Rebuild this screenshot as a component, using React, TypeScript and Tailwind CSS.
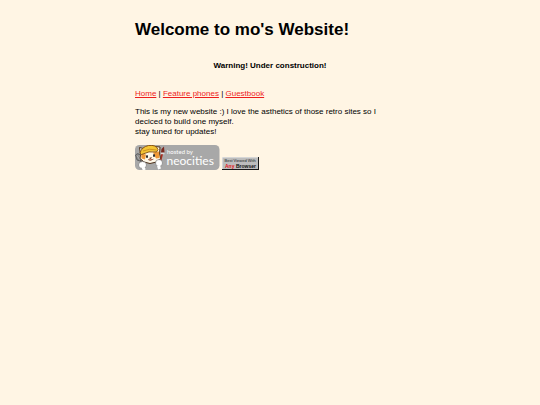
const links = [
  { label: 'Home', href: '#home' },
  { label: 'Feature phones', href: '#phones' },
  { label: 'Guestbook', href: '#guestbook' },
]

function NeocitiesBadge() {
  return (
    <svg viewBox="0 0 170 50" className="w-[85px]" role="img" aria-label="hosted by neocities">
      <rect width="169" height="50" rx="9" fill="#a8a8a8" />
      {/* spatula */}
      <path d="M10 27 L15 42" stroke="#555" strokeWidth="3" />
      <path d="M1 20 q4 -5 9 -1 l4 10 q-5 5 -10 1 z" fill="#888" stroke="#333" />
      <path d="M4 21 l5 8 M8 20 l3 8" stroke="#ddd" />
      {/* paint brush */}
      <path d="M50 34 L54 18" stroke="#a52c20" strokeWidth="4" strokeLinecap="round" />
      <path d="M52 15 L53 8 L58 3 L59 15 Z" fill="#7c2a20" />
      <path d="M52 17 h7" stroke="#ddd" strokeWidth="3" />
      {/* cat */}
      <path d="M11 19 L9 5 L20 8 L37 3 L50 4 L49 18 L51 27 L43 34 L30 37 L18 34 L10 27 Z" fill="#fff8e8" stroke="#4e321c" strokeWidth="2" />
      <path d="M12 17 L22 19 L20 29 L13 27 Z M36 15 L48 13 L49 26 L42 27 Z" fill="#ef9838" />
      <path d="M10 16 Q13 4 27 1 Q42 -1 46 9 L43 14 Q28 11 13 19 Z" fill="#f4c535" stroke="#8b5715" strokeWidth="2" />
      <path d="M16 12 Q29 6 43 10" fill="none" stroke="#d09320" strokeWidth="2" />
      <ellipse cx="24" cy="23" rx="2" ry="3" fill="#222" />
      <ellipse cx="38" cy="21" rx="2" ry="3" fill="#222" />
      <path d="M29 26 l4 -1 l-2 3 z M26 29 q5 4 11 -1" fill="#ca5741" stroke="#56301c" />
      <ellipse cx="15" cy="40" rx="8" ry="7" fill="#fff" stroke="#555" />
      <ellipse cx="48" cy="36" rx="7" ry="7" fill="#fff" stroke="#555" />
      <path d="M16 45 L19 50 M47 41 L49 48" stroke="#fff" strokeWidth="6" />
      <text fill="#fff" className="font-['Lato',sans-serif]">
        <tspan x="64" y="17" fontSize="12">
          hosted by
        </tspan>
        <tspan x="63" y="40" fontSize="24">
          neocities
        </tspan>
      </text>
    </svg>
  )
}

function AnyBrowserBadge() {
  return (
    <svg viewBox="0 0 74 26" className="w-[37px]" role="img" aria-label="Best Viewed With Any Browser">
      <rect width="74" height="26" fill="#181818" />
      <rect width="72" height="24" fill="#eee" />
      <rect x="1" y="1" width="71" height="23" fill="#bdbdbd" />
      <text x="5" y="9" fill="#222" fontSize="8" className="font-['Liberation_Sans',sans-serif]">
        Best Viewed With
      </text>
      <text y="21" fontSize="10" className="font-['Liberation_Sans',sans-serif] font-bold">
        <tspan x="6" fill="#e5131b">
          Any
        </tspan>
        <tspan x="28" fill="#111">
          Browser
        </tspan>
      </text>
    </svg>
  )
}

export default function App() {
  return (
    <div className="min-h-screen bg-[#fff5e4] font-['Liberation_Sans',Arial,sans-serif] text-[8px] leading-[10px] text-black">
      <main className="mx-auto w-1/2 pt-5">
        <h1 className="text-[17px] leading-5 font-bold">Welcome to mo's Website!</h1>
        <h4 className="mt-[21px] text-center font-bold">Warning! Under construction!</h4>
        <nav className="mt-[18px]">
          {links.map((link, i) => (
            <span key={link.href}>
              {i > 0 && ' | '}
              <a href={link.href} className="text-[#ee1c1c] underline">
                {link.label}
              </a>
            </span>
          ))}
        </nav>
        <p className="mt-2">
          This is my new website :) I love the asthetics of those retro sites so I deciced to build one myself.
          <br />
          stay tuned for updates!
        </p>
        <div className="mt-2 flex items-end gap-0.5">
          <NeocitiesBadge />
          <AnyBrowserBadge />
        </div>
      </main>
    </div>
  )
}
